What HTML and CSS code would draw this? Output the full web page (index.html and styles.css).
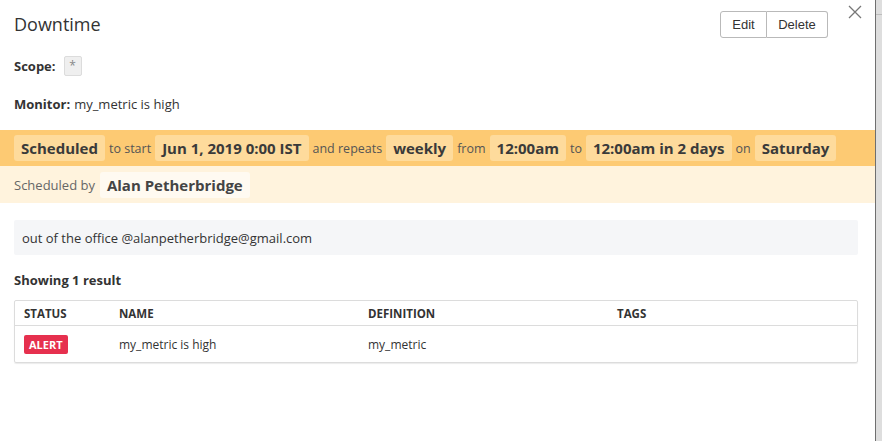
FILE: index.html
```html
<!DOCTYPE html>
<html>
<head>
<meta charset="utf-8">
<link rel="stylesheet" href="styles.css">
</head>
<body>
<div class="page">
  <div class="modal">
    <div class="header">
      <h1 class="title">Downtime</h1>
      <div class="actions">
        <div class="btn-group">
          <button class="btn">Edit</button>
          <button class="btn">Delete</button>
        </div>
        <button class="close" aria-label="Close">
          <svg width="14" height="14" viewBox="0 0 14 14"><path d="M1 1L13 13M13 1L1 13" stroke="#777" stroke-width="1.3" fill="none"/></svg>
        </button>
      </div>
    </div>
    <div class="field scope"><b>Scope:</b> <span class="tag">*</span></div>
    <div class="field monitor"><b>Monitor:</b> my_metric is high</div>
    <div class="band band-main">
      <span class="pill">Scheduled</span><span class="word">to start</span><span class="pill">Jun 1, 2019 0:00 IST</span><span class="word">and repeats</span><span class="pill">weekly</span><span class="word">from</span><span class="pill">12:00am</span><span class="word">to</span><span class="pill">12:00am in 2 days</span><span class="word">on</span><span class="pill">Saturday</span>
    </div>
    <div class="band band-by">
      <span class="word first">Scheduled by</span><span class="pill">Alan Petherbridge</span>
    </div>
    <div class="message">out of the office @alanpetherbridge@gmail.com</div>
    <div class="count">Showing 1 result</div>
    <div class="table">
      <div class="row head">
        <div class="cell c-status">STATUS</div>
        <div class="cell">NAME</div>
        <div class="cell">DEFINITION</div>
        <div class="cell">TAGS</div>
      </div>
      <div class="row body">
        <div class="cell c-status"><span class="alert">ALERT</span></div>
        <div class="cell">my_metric is high</div>
        <div class="cell">my_metric</div>
        <div class="cell"></div>
      </div>
    </div>
  </div>
  <div class="edge"><div class="edge-line"></div></div>
</div>
</body>
</html>
```
FILE: styles.css
```css
html, body {
  margin: 0;
  padding: 0;
  background: #fff;
}
body {
  font-family: "Open Sans", "Noto Sans", sans-serif;
  color: #333;
}
.page {
  display: flex;
  height: 441px;
}
.modal {
  width: 875px;
  border-right: 1px solid #6f6f6f;
  background: #fff;
}
.edge {
  flex: 1;
  background: #dedede;
}
.edge-line {
  margin-top: 14px;
  height: 1px;
  background: #bdbdbd;
}
.header {
  display: flex;
  align-items: flex-start;
  padding: 11px 0 0 14px;
  height: 34px;
}
.title {
  margin: 0;
  font-size: 18px;
  font-weight: 400;
  line-height: 26px;
  color: #333;
}
.actions {
  margin-left: auto;
  display: flex;
  align-items: flex-start;
}
.btn-group {
  display: flex;
}
.btn {
  font-family: "Liberation Sans", Arial, sans-serif;
  font-size: 13px;
  color: #333;
  background: #fff;
  border: 1px solid #b9b9b9;
  height: 27px;
  padding: 0 8px;
  margin: 0;
  cursor: pointer;
}
.btn:first-child {
  border-radius: 3px 0 0 3px;
  width: 47px;
}
.btn:last-child {
  border-radius: 0 3px 3px 0;
  border-left: none;
  width: 61px;
}
.close {
  margin: -6px 13px 0 20px;
  padding: 0;
  border: none;
  background: none;
  width: 14px;
  height: 14px;
  display: flex;
}
.field {
  padding-left: 14px;
  font-size: 13px;
  line-height: 20px;
  height: 20px;
  display: flex;
  align-items: center;
  color: #333;
}
.field b {
  font-weight: 700;
  margin-right: 4px;
}
.scope {
  margin-top: 11px;
}
.tag {
  display: inline-flex;
  align-items: center;
  justify-content: center;
  width: 16px;
  height: 18px;
  margin-left: 4px;
  background: #efefef;
  border: 1px solid #dcdcdc;
  border-radius: 2px;
  color: #888;
  font-size: 12px;
}
.monitor {
  margin-top: 18px;
}
.band {
  display: flex;
  align-items: center;
  padding: 0 14px;
}
.band-main {
  margin-top: 16px;
  height: 36px;
  background: #fdca73;
}
.band-by {
  height: 37px;
  background: #fff3dd;
}
.pill {
  display: inline-flex;
  align-items: center;
  height: 26px;
  padding: 0 7px;
  border-radius: 3px;
  font-size: 15px;
  font-weight: 700;
  color: #3a3a3a;
}
.band-main .pill {
  background: #fedb9c;
}
.band-by .pill {
  background: #fffaf1;
  color: #444;
}
.word {
  font-size: 12.5px;
  color: #555;
  margin: 0 4px;
}
.word.first {
  margin: 0 5px 0 0;
  font-size: 13px;
  color: #666;
}
.message {
  margin: 17px 17px 0 14px;
  height: 35px;
  display: flex;
  align-items: center;
  padding: 0 8px;
  background: #f5f6f8;
  border-radius: 2px;
  font-size: 13px;
  color: #333;
}
.count {
  margin: 15px 0 0 14px;
  font-size: 13px;
  font-weight: 700;
  line-height: 20px;
  color: #333;
}
.table {
  margin: 10px 17px 0 14px;
  border: 1px solid #dcdcdc;
  border-radius: 2px;
  box-shadow: 0 1px 1px rgba(0,0,0,0.08);
}
.row {
  display: grid;
  grid-template-columns: 95px 1fr 1fr 1fr;
  align-items: center;
}
.row.head {
  height: 24px;
  border-bottom: 1px solid #dcdcdc;
  font-size: 11.5px;
  font-weight: 700;
  color: #333;
}
.row.body {
  height: 36px;
  font-size: 12px;
  color: #333;
}
.cell {
  padding-left: 9px;
}
.alert {
  display: inline-flex;
  align-items: center;
  height: 19px;
  padding: 0 5px;
  background: #e6304e;
  color: #fff;
  font-size: 11px;
  font-weight: 700;
  border-radius: 2px;
}
```
